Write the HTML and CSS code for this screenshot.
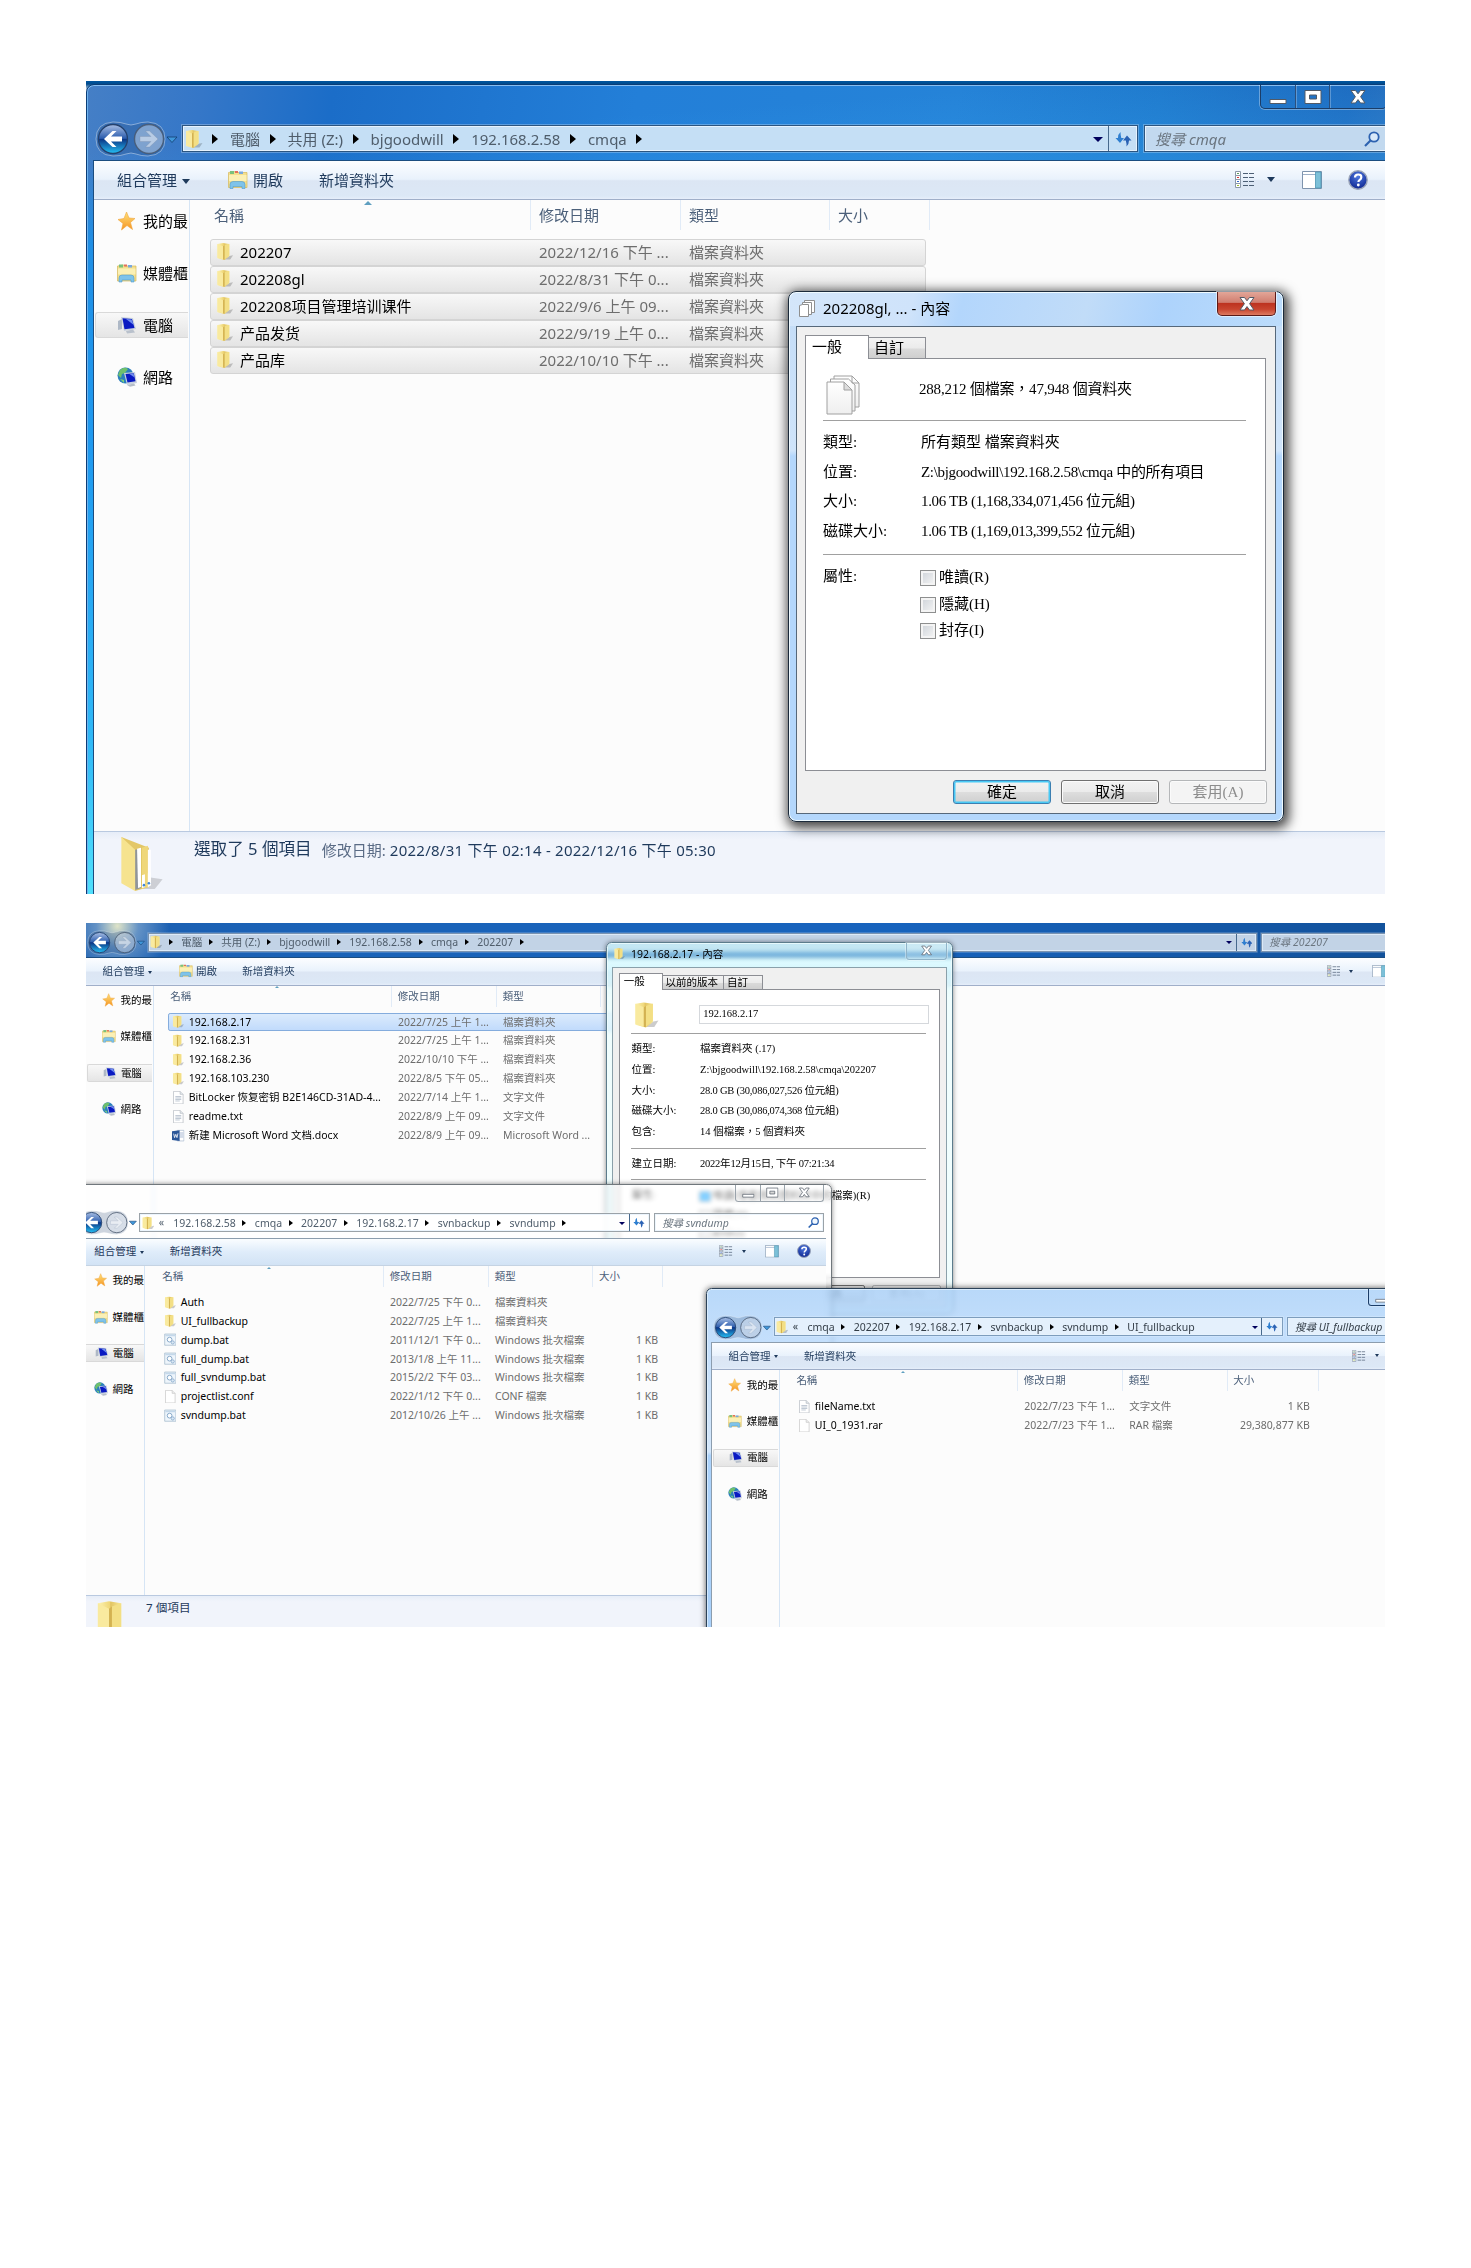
FILE: index.html
```html
<!DOCTYPE html>
<html lang="zh-Hant">
<head>
<meta charset="utf-8">
<title>cmqa</title>
<link rel="stylesheet" href="styles.css">
</head>
<body>
<svg class="defs" width="0" height="0" aria-hidden="true">
  <defs>
    <linearGradient id="gFolder" x1="0" x2="1" y1="0" y2="0"><stop offset="0" stop-color="#fdf3b4"/><stop offset=".5" stop-color="#efd778"/><stop offset=".55" stop-color="#e2c462"/><stop offset="1" stop-color="#f8e896"/></linearGradient>
    <linearGradient id="gBack" x1="0" x2="0" y1="0" y2="1"><stop offset="0" stop-color="#a9bfe4"/><stop offset=".48" stop-color="#2b5cad"/><stop offset=".5" stop-color="#0b3484"/><stop offset="1" stop-color="#25c1f5"/></linearGradient>
    <linearGradient id="gStar" x1="0" x2="0" y1="0" y2="1"><stop offset="0" stop-color="#ffe27a"/><stop offset="1" stop-color="#f59322"/></linearGradient>
    <linearGradient id="gPage" x1="0" x2="0" y1="0" y2="1"><stop offset="0" stop-color="#fff"/><stop offset="1" stop-color="#efefef"/></linearGradient>
    <radialGradient id="gHelp" cx=".5" cy=".3" r=".7"><stop offset="0" stop-color="#4f79e0"/><stop offset="1" stop-color="#0d2590"/></radialGradient>
  </defs>
  <symbol id="i-folder" viewBox="0 0 18 20"><path d="M12 15l5.500-1-3 4.500H8z" fill="#000" opacity=".2"/><path d="M1 2l6-1 6.500 1v13l-5 4-7.500-2z" fill="url(#gFolder)"/><path d="M8.500 3.500L13.500 2v12l-5 4.500z" fill="#f3df85"/><path d="M1 2l6 2.500v14l-6-2z" fill="#f9ea9f"/><path d="M7 4.500l1.500-1v15H7z" fill="#d3b252"/></symbol>
  <symbol id="i-bigfolder" viewBox="0 0 44 58"><path d="M30 42l14 2-8 10H16z" fill="#000" opacity=".15"/><path d="M2 1l28 11v40l-14 4z" fill="#e3c767"/><path d="M16 14l6-1v40l-6 2z" fill="#8f959b"/><path d="M18 13l4-1v40l-3 1z" fill="#fff"/><path d="M23 12l6-2v42l-6 2z" fill="#efd77a"/><path d="M29 14h3v36l-3 2z" fill="#fff"/><path d="M23 40l3-1v13l-3 1zM29 38l3-1v13l-3 2z" fill="#fff"/><circle cx="25" cy="50" r="1.300" fill="#3f86d8"/><circle cx="30" cy="48" r="1.300" fill="#3f86d8"/><path d="M2 1l14 13v42L2 48z" fill="#f6e38f"/></symbol>
  <symbol id="i-star" viewBox="0 0 20 20"><path d="M9.500 1l2.500 6 6 .5-4.500 4 2 7-5.500-4-5.500 4.500L6 12.500 1 8.500l6-1z" fill="url(#gStar)" stroke="#f0a63c" stroke-width=".6"/></symbol>
  <symbol id="i-library" viewBox="0 0 20 19"><path d="M.5 2.500l6-1 2 1h10.500v15H.5z" fill="#f4df8d" stroke="#d6b95b" stroke-width=".7"/><path d="M2 1h4v3H2z" fill="#79c17d"/><path d="M7 1h3v2H7z" fill="#e3705b"/><path d="M11 1.500h4V4h-4z" fill="#79a8df"/><path d="M1 5h17.500v6H1z" fill="#fbf0b5"/><path d="M2 18.500v-4q0-3 3-3h9q3 0 3 3v4h-3v-2H5v2z" fill="#7ec3ea" stroke="#519bcb" stroke-width=".6"/></symbol>
  <symbol id="i-computer" viewBox="0 0 20 18"><path d="M1 5l4-2v10l-4 1z" fill="#aeb8c6"/><path d="M4 1l12 1 3 11-12 2z" fill="#c9d2de"/><path d="M5.500 2.300l9.500.8L17.500 12l-10 1.300z" fill="#0a1ac2"/><path d="M9 3l5.500.4L16.800 9z" fill="#6f8df0"/><path d="M9 15l7-1.500 2 3-8 1z" fill="#b9c1cc"/></symbol>
  <symbol id="i-network" viewBox="0 0 20 20"><circle cx="8.500" cy="8.500" r="8" fill="#2b7fbd"/><path d="M3 3q4-4 8-1l-3 4-3 1-1 4-3-3z" fill="#6fc06c"/><path d="M3 12l4 1v3z" fill="#7fd07b"/><path d="M7 6l11-1 2 11-10 2z" fill="#c9d2de"/><path d="M8.500 7l8.300-.8 1.700 8-8 1.300z" fill="#0a1ac2"/><path d="M12.500 7l4-.6 1 4z" fill="#6f8df0"/><path d="M10 18l7-1.500 1.500 2-5.500 1.300z" fill="#b5bdc8"/></symbol>
  <symbol id="i-views" viewBox="0 0 19 17"><path d="M.5.5h5v4h-5zm0 4h5v4h-5zm0 4h5v4h-5zm0 4h5v4h-5z" fill="#fff" stroke="#8b98a8"/><path d="M2 2.500h2" stroke="#5d9a5d"/><path d="M2 6.500h2" stroke="#d33"/><path d="M2 10.500h2" stroke="#36c"/><path d="M2 14.500h2" stroke="#9b3"/><path d="M8 2.500h5M14 2.500h5M8 6.500h5M14 6.500h5M8 10.500h5M14 10.500h5M8 14.500h5M14 14.500h5" stroke="#4d5f75"/></symbol>
  <symbol id="i-pane" viewBox="0 0 20 18"><path d="M.5.5h19v17H.5z" fill="#fff" stroke="#7d93ad"/><path d="M1 3.500h13" stroke="#9db0c8"/><path d="M13.500 1H19v16h-5.500z" fill="#7cc0d8" stroke="#4d96b4" stroke-width=".8"/></symbol>
  <symbol id="i-help" viewBox="0 0 20 20"><circle cx="10" cy="10" r="9.200" fill="url(#gHelp)" stroke="#9aa4b8" stroke-width="1.400"/><path d="M7 7.500q0-3 3.200-3t3.100 2.700q0 1.500-1.600 2.600-1.300.9-1.300 2.200" fill="none" stroke="#fff" stroke-width="2.200"/><circle cx="10.300" cy="15" r="1.400" fill="#fff"/></symbol>
  <symbol id="i-refresh" viewBox="0 0 17 16"><path d="M5.500 1Q3 3 3 7H.5L5 12l4-5H6.300Q5.500 4 5.500 1z" fill="#2f7fd0"/><path d="M11.500 15.500q2.500-2 2.500-6h2.500L12 4.500 8 9.500h2.800q.9 3 .7 6z" fill="#2a62b4"/></symbol>
  <symbol id="i-search" viewBox="0 0 16 16"><circle cx="10" cy="6" r="4.700" fill="#e8f3ff" fill-opacity=".6" stroke="#2d62b0" stroke-width="1.800"/><path d="M6.500 9.500L1 15" stroke="#2d62b0" stroke-width="2.200"/></symbol>
  <symbol id="i-pages" viewBox="0 0 34 40"><g fill="url(#gPage)" stroke="#a0a0a0" stroke-width="1"><path d="M8 1h18l7 7v24H8z"/><path d="M4.500 4h18l6.500 6v26H4.500z"/><path d="M1 7h17l8 8v24H1z"/><path d="M18 7v8h8z" fill="#ddd"/><path d="M26 1v7h7" fill="none"/></g></symbol>
  <symbol id="i-minipages" viewBox="0 0 16 19"><g fill="#fff" stroke="#8f8f8f"><path d="M5.500 1.500h10v12h-10z"/><path d="M3.500 3.500h9v12h-9z"/><path d="M.5 6.500l3-1h6v12h-9z"/></g></symbol>
  <symbol id="i-txt" viewBox="0 0 16 18"><path d="M1.500.5h9l4 4v13h-13z" fill="#fff" stroke="#b9bec4"/><path d="M10.500.5v4h4" fill="#e4e8ec" stroke="#b9bec4"/><path d="M4 7.500h8M4 9.500h8M4 11.500h8M4 13.500h6" stroke="#a9b6c4"/></symbol>
  <symbol id="i-blank" viewBox="0 0 16 18"><path d="M1.500.5h9l4 4v13h-13z" fill="#fff" stroke="#c9c9c9"/><path d="M10.500.5v4h4" fill="#eee" stroke="#c9c9c9"/></symbol>
  <symbol id="i-bat" viewBox="0 0 18 18"><path d="M1 1h16v16H1z" fill="#eef5fb" stroke="#9db4c9"/><path d="M2 2h14v2H2z" fill="#c4d8ea"/><circle cx="8" cy="9" r="3.400" fill="#fff" stroke="#7ea2c6" stroke-width="1.300"/><circle cx="12.500" cy="13" r="2.300" fill="#dbe8f4" stroke="#7ea2c6"/></symbol>
  <symbol id="i-docx" viewBox="0 0 19 18"><path d="M8 1h10v16H8z" fill="#fff" stroke="#a3b4cc"/><path d="M12 5h5M12 8h5M12 11h5" stroke="#7f98c0"/><path d="M0 2.500L11.500 1v16L0 15.500z" fill="#2a5699"/><path d="M2.500 6l1.400 6 1.800-5 1.800 5 1.500-6.500" fill="none" stroke="#fff" stroke-width="1.200"/></symbol>
  <symbol id="i-nav" viewBox="0 0 86 36"><path d="M18 1q8 0 13 2t10 0 12-2q17 1 17 17T53 35q-7 0-12-2t-10 0-13 2Q1 34 1 18T18 1z" fill="#20406c" fill-opacity=".22" stroke="#fff" stroke-opacity=".4"/><circle cx="18" cy="18" r="14.500" fill="url(#gBack)" stroke="#24426e" stroke-width="1.300"/><path d="M9 18l8.500-8h4L16 15.500h11v5H16l5.500 5.500h-4z" fill="#fff"/><circle cx="54" cy="18" r="14.500" fill="#e4ecf5" fill-opacity=".42" stroke="#47566c" stroke-opacity=".8" stroke-width="1.400"/><path d="M63 18l-8.500-8h-4l5.500 5.500H45v5h11L50.500 26h4z" fill="#fff" fill-opacity=".45" stroke="#7b8ea8" stroke-opacity=".5" stroke-width=".6"/><path d="M72 16h10l-5 5.500z" fill="#3f97da" stroke="#123d70" stroke-width=".8"/></symbol>
  <symbol id="i-min" viewBox="0 0 18 16"><path d="M1 10.500h16v4H1z" fill="#fff" stroke="#525a66"/></symbol>
  <symbol id="i-max" viewBox="0 0 18 16"><path d="M1 1.500h16v13H1z M5.500 6h7v4h-7z" fill="#fff" fill-rule="evenodd" stroke="#525a66"/></symbol>
  <symbol id="i-close" viewBox="0 0 16 16"><path d="M1 1.500h4.500L8 4.800l2.500-3.300H15L10.600 7.700l4.400 6.300h-4.500L8 10.600 5.500 14H1l4.400-6.300z" fill="#fff" stroke="#525a66"/></symbol>
</svg>

<main class="page">
<section class="shot shot-large">
  <div class="explorer" id="w1">
    <div class="winbtns"><span><svg><use href="#i-min"/></svg></span><span><svg><use href="#i-max"/></svg></span><span><svg><use href="#i-close"/></svg></span></div>
    <div class="nav">
      <svg class="navicon"><use href="#i-nav"/></svg>
      <div class="address"><svg class="fi"><use href="#i-folder"/></svg><i></i><b>電腦</b><i></i><b>共用 (Z:)</b><i></i><b>bjgoodwill</b><i></i><b>192.168.2.58</b><i></i><b>cmqa</b><i></i><span class="caret"></span><span class="refresh"><svg><use href="#i-refresh"/></svg></span></div>
      <div class="search"><em>搜尋 cmqa</em><svg><use href="#i-search"/></svg></div>
    </div>
    <div class="client">
      <div class="toolbar"><span class="org">組合管理</span><svg class="lib"><use href="#i-library"/></svg><span class="open">開啟</span><span>新增資料夾</span><div class="tools"><svg class="views"><use href="#i-views"/></svg><u></u><svg class="pane"><use href="#i-pane"/></svg><svg class="help"><use href="#i-help"/></svg></div></div>
      <div class="body">
        <ul class="side"><li><svg><use href="#i-star"/></svg>我的最</li><li><svg><use href="#i-library"/></svg>媒體櫃</li><li class="on"><svg><use href="#i-computer"/></svg>電腦</li><li><svg><use href="#i-network"/></svg>網路</li></ul>
        <div class="list">
          <div class="head"><span>名稱</span><span>修改日期</span><span>類型</span><span>大小</span></div>
          <div class="row picked"><span><svg><use href="#i-folder"/></svg>202207</span><span>2022/12/16 下午 ...</span><span>檔案資料夾</span><span></span></div>
          <div class="row picked"><span><svg><use href="#i-folder"/></svg>202208gl</span><span>2022/8/31 下午 0...</span><span>檔案資料夾</span><span></span></div>
          <div class="row picked"><span lang="zh-Hans"><svg><use href="#i-folder"/></svg>202208项目管理培训课件</span><span>2022/9/6 上午 09...</span><span>檔案資料夾</span><span></span></div>
          <div class="row picked"><span lang="zh-Hans"><svg><use href="#i-folder"/></svg>产品发货</span><span>2022/9/19 上午 0...</span><span>檔案資料夾</span><span></span></div>
          <div class="row picked"><span lang="zh-Hans"><svg><use href="#i-folder"/></svg>产品库</span><span>2022/10/10 下午 ...</span><span>檔案資料夾</span><span></span></div>
        </div>
      </div>
      <div class="status"><svg><use href="#i-bigfolder"/></svg><strong>選取了 5 個項目</strong><p><span>修改日期:</span> 2022/8/31 下午 02:14 - 2022/12/16 下午 05:30</p></div>
    </div>
  </div>

  <div class="dialog" id="d1">
    <div class="dtitle"><svg><use href="#i-minipages"/></svg><span>202208gl, ... - 內容</span></div>
    <div class="dclose"><svg><use href="#i-close"/></svg></div>
    <div class="dframe">
      <div class="tabs"><span class="cur">一般</span><span>自訂</span></div>
      <div class="panel">
        <div class="lead"><svg><use href="#i-pages"/></svg><span class="count">288,212 個檔案，47,948 個資料夾</span></div>
        <dl><dt>類型:</dt><dd>所有類型 檔案資料夾</dd><dt>位置:</dt><dd class="tight">Z:\bjgoodwill\192.168.2.58\cmqa 中的所有項目</dd><dt>大小:</dt><dd class="tight">1.06 TB (1,168,334,071,456 位元組)</dd><dt>磁碟大小:</dt><dd class="tight">1.06 TB (1,169,013,399,552 位元組)</dd></dl>
        <dl><dt>屬性:</dt><dd class="checks"><label><i></i>唯讀(R)</label><label><i></i>隱藏(H)</label><label><i></i>封存(I)</label></dd></dl>
      </div>
      <div class="buttons"><span class="ok">確定</span><span>取消</span><span class="off">套用(A)</span></div>
    </div>
  </div>
</section>

<section class="shot shot-small">
 <div class="desk">
  <div class="explorer" id="w2">
    <div class="winbtns"><span><svg><use href="#i-min"/></svg></span><span><svg><use href="#i-max"/></svg></span><span><svg><use href="#i-close"/></svg></span></div>
    <div class="nav">
      <svg class="navicon"><use href="#i-nav"/></svg>
      <div class="address"><svg class="fi"><use href="#i-folder"/></svg><i></i><b>電腦</b><i></i><b>共用 (Z:)</b><i></i><b>bjgoodwill</b><i></i><b>192.168.2.58</b><i></i><b>cmqa</b><i></i><b>202207</b><i></i><span class="caret"></span><span class="refresh"><svg><use href="#i-refresh"/></svg></span></div>
      <div class="search"><em>搜尋 202207</em></div>
    </div>
    <div class="client">
      <div class="toolbar"><span class="org">組合管理</span><svg class="lib"><use href="#i-library"/></svg><span class="open">開啟</span><span>新增資料夾</span><div class="tools"><svg class="views"><use href="#i-views"/></svg><u></u><svg class="pane"><use href="#i-pane"/></svg><svg class="help"><use href="#i-help"/></svg></div></div>
      <div class="body">
        <ul class="side"><li><svg><use href="#i-star"/></svg>我的最</li><li><svg><use href="#i-library"/></svg>媒體櫃</li><li class="on"><svg><use href="#i-computer"/></svg>電腦</li><li><svg><use href="#i-network"/></svg>網路</li></ul>
        <div class="list">
          <div class="head"><span>名稱</span><span>修改日期</span><span>類型</span></div>
          <div class="row active"><span><svg><use href="#i-folder"/></svg>192.168.2.17</span><span>2022/7/25 上午 1...</span><span>檔案資料夾</span><span></span></div>
          <div class="row"><span><svg><use href="#i-folder"/></svg>192.168.2.31</span><span>2022/7/25 上午 1...</span><span>檔案資料夾</span><span></span></div>
          <div class="row"><span><svg><use href="#i-folder"/></svg>192.168.2.36</span><span>2022/10/10 下午 ...</span><span>檔案資料夾</span><span></span></div>
          <div class="row"><span><svg><use href="#i-folder"/></svg>192.168.103.230</span><span>2022/8/5 下午 05...</span><span>檔案資料夾</span><span></span></div>
          <div class="row"><span lang="zh-Hans"><svg><use href="#i-txt"/></svg>BitLocker 恢复密钥 B2E146CD-31AD-4...</span><span>2022/7/14 上午 1...</span><span>文字文件</span><span></span></div>
          <div class="row"><span><svg><use href="#i-txt"/></svg>readme.txt</span><span>2022/8/9 上午 09...</span><span>文字文件</span><span></span></div>
          <div class="row"><span lang="zh-Hans"><svg><use href="#i-docx"/></svg>新建 Microsoft Word 文档.docx</span><span>2022/8/9 上午 09...</span><span>Microsoft Word ...</span><span></span></div>
        </div>
      </div>
    </div>
  </div>

  <div class="dialog" id="d2">
    <div class="dtitle"><svg><use href="#i-folder"/></svg><span>192.168.2.17 - 內容</span></div>
    <div class="dclose"><svg><use href="#i-close"/></svg></div>
    <div class="dframe">
      <div class="tabs"><span class="cur">一般</span><span class="prev">以前的版本</span><span>自訂</span></div>
      <div class="panel">
        <div class="lead"><svg><use href="#i-folder"/></svg><span class="field">192.168.2.17</span></div>
        <dl><dt>類型:</dt><dd>檔案資料夾 (.17)</dd><dt>位置:</dt><dd>Z:\bjgoodwill\192.168.2.58\cmqa\202207</dd><dt>大小:</dt><dd class="tight">28.0 GB (30,086,027,526 位元組)</dd><dt>磁碟大小:</dt><dd class="tight">28.0 GB (30,086,074,368 位元組)</dd><dt>包含:</dt><dd>14 個檔案，5 個資料夾</dd></dl>
        <dl><dt>建立日期:</dt><dd class="tight">2022年12月15日, 下午 07:21:34</dd></dl>
        <dl><dt>屬性:</dt><dd class="checks"><label><i class="full"></i>唯讀(僅套用到資料夾中的檔案)(R)</label><label><i></i>隱藏(H)</label><label><i></i>封存(I)</label></dd></dl>
      </div>
      <div class="buttons"><span class="ok">確定</span><span>取消</span><span class="off">套用(A)</span></div>
    </div>
  </div>

  <div class="explorer" id="w3">
    <div class="winbtns"><span><svg><use href="#i-min"/></svg></span><span><svg><use href="#i-max"/></svg></span><span><svg><use href="#i-close"/></svg></span></div>
    <div class="nav">
      <svg class="navicon"><use href="#i-nav"/></svg>
      <div class="address"><svg class="fi"><use href="#i-folder"/></svg><s>«</s><b>192.168.2.58</b><i></i><b>cmqa</b><i></i><b>202207</b><i></i><b>192.168.2.17</b><i></i><b>svnbackup</b><i></i><b>svndump</b><i></i><span class="caret"></span><span class="refresh"><svg><use href="#i-refresh"/></svg></span></div>
      <div class="search"><em>搜尋 svndump</em><svg><use href="#i-search"/></svg></div>
    </div>
    <div class="client">
      <div class="toolbar"><span class="org">組合管理</span><span>新增資料夾</span><div class="tools"><svg class="views"><use href="#i-views"/></svg><u></u><svg class="pane"><use href="#i-pane"/></svg><svg class="help"><use href="#i-help"/></svg></div></div>
      <div class="body">
        <ul class="side"><li><svg><use href="#i-star"/></svg>我的最</li><li><svg><use href="#i-library"/></svg>媒體櫃</li><li class="on"><svg><use href="#i-computer"/></svg>電腦</li><li><svg><use href="#i-network"/></svg>網路</li></ul>
        <div class="list">
          <div class="head"><span>名稱</span><span>修改日期</span><span>類型</span><span>大小</span></div>
          <div class="row"><span><svg><use href="#i-folder"/></svg>Auth</span><span>2022/7/25 下午 0...</span><span>檔案資料夾</span><span></span></div>
          <div class="row"><span><svg><use href="#i-folder"/></svg>UI_fullbackup</span><span>2022/7/25 上午 1...</span><span>檔案資料夾</span><span></span></div>
          <div class="row"><span><svg><use href="#i-bat"/></svg>dump.bat</span><span>2011/12/1 下午 0...</span><span>Windows 批次檔案</span><span>1 KB</span></div>
          <div class="row"><span><svg><use href="#i-bat"/></svg>full_dump.bat</span><span>2013/1/8 上午 11...</span><span>Windows 批次檔案</span><span>1 KB</span></div>
          <div class="row"><span><svg><use href="#i-bat"/></svg>full_svndump.bat</span><span>2015/2/2 下午 03...</span><span>Windows 批次檔案</span><span>1 KB</span></div>
          <div class="row"><span><svg><use href="#i-blank"/></svg>projectlist.conf</span><span>2022/1/12 下午 0...</span><span>CONF 檔案</span><span>1 KB</span></div>
          <div class="row"><span><svg><use href="#i-bat"/></svg>svndump.bat</span><span>2012/10/26 上午 ...</span><span>Windows 批次檔案</span><span>1 KB</span></div>
        </div>
      </div>
      <div class="status"><svg class="plain" viewBox="0 0 18 20" preserveAspectRatio="none"><use href="#i-folder"/></svg><strong>7 個項目</strong></div>
    </div>
  </div>

  <div class="explorer" id="w4">
    <div class="winbtns"><span><svg><use href="#i-min"/></svg></span><span><svg><use href="#i-max"/></svg></span><span><svg><use href="#i-close"/></svg></span></div>
    <div class="nav">
      <svg class="navicon"><use href="#i-nav"/></svg>
      <div class="address"><svg class="fi"><use href="#i-folder"/></svg><s>«</s><b>cmqa</b><i></i><b>202207</b><i></i><b>192.168.2.17</b><i></i><b>svnbackup</b><i></i><b>svndump</b><i></i><b>UI_fullbackup</b><span class="caret"></span><span class="refresh"><svg><use href="#i-refresh"/></svg></span></div>
      <div class="search"><em>搜尋 UI_fullbackup</em></div>
    </div>
    <div class="client">
      <div class="toolbar"><span class="org">組合管理</span><span>新增資料夾</span><div class="tools"><svg class="views"><use href="#i-views"/></svg><u></u><svg class="pane"><use href="#i-pane"/></svg><svg class="help"><use href="#i-help"/></svg></div></div>
      <div class="body">
        <ul class="side"><li><svg><use href="#i-star"/></svg>我的最</li><li><svg><use href="#i-library"/></svg>媒體櫃</li><li class="on"><svg><use href="#i-computer"/></svg>電腦</li><li><svg><use href="#i-network"/></svg>網路</li></ul>
        <div class="list">
          <div class="head"><span>名稱</span><span>修改日期</span><span>類型</span><span>大小</span></div>
          <div class="row"><span><svg><use href="#i-txt"/></svg>fileName.txt</span><span>2022/7/23 下午 1...</span><span>文字文件</span><span>1 KB</span></div>
          <div class="row"><span><svg><use href="#i-blank"/></svg>UI_0_1931.rar</span><span>2022/7/23 下午 1...</span><span>RAR 檔案</span><span>29,380,877 KB</span></div>
        </div>
      </div>
    </div>
  </div>
 </div>
</section>
</main>
</body>
</html>
```
FILE: styles.css
```css
* { box-sizing: border-box; }
body { margin: 0; background: #fff; font: 15px/20px "Noto Sans", "Noto Sans CJK TC", sans-serif; color: #000; }
[lang="zh-Hans"] { font-family: "Noto Sans", "Noto Sans CJK SC", sans-serif; }
svg { display: block; flex: none; }
.defs { position: absolute; }
.page { height: 2268px; padding: 81px 86px 0; overflow: hidden; }
.shot { position: relative; width: 1299px; overflow: hidden; }
.shot-large { height: 813px; background: linear-gradient(#0056a0 0, #004a8c 3px, #fff 10px); }
.shot-small { height: 704px; margin-top: 29px; }
.desk { position: relative; zoom: .7; width: 1856px; height: 1006px; }

/* Explorer window */
.explorer { position: absolute; display: flex; flex-direction: column; padding: 0 7px 7px; border-radius: 8px; overflow: hidden; white-space: nowrap; }
#w1 { left: 0; top: 3px; width: 1311px; height: 824px; border: 1px solid #0b3d77; box-shadow: inset 0 1px #86bdf0, inset 1px 0 #6fb3ee;
  background: linear-gradient(#2a8be200 0, #1f8fe5 10%, #1f9af0 35%, #2fb8f7 70%, #63f6ff 100%) left 0 top 77px / 8px 100% no-repeat, linear-gradient(176deg, transparent 40%, #36a5f066 100%) 0 0 / 100% 77px no-repeat, linear-gradient(100deg, #457fc6 0, #3577c8 8%, #1b6dc8 17%, #237fd8 38%, #2583d8 60%, #1f7acd 74%, #1c68bd 87%, #3d73b4 97%); }
#w2 { left: -7px; top: -26px; width: 1938px; height: 1000px; background: radial-gradient(circle at 52px 30px, #dfe4c8 0, #88acd0aa 30px, transparent 75px), linear-gradient(90deg, #1c5fb0 0, #1a63b8 20%, #1763bd 60%, #12529c 95%); }
#w3 { left: -20px; top: 373px; width: 1085px; height: 690px; border: 1px solid #70777c; background: #ffffff88; backdrop-filter: blur(3px) saturate(1.4); box-shadow: 0 0 8px #0007; }
#w4 { left: 886px; top: 522px; width: 1083px; height: 520px; border: 1px solid #2c4258; background: linear-gradient(#a9d0f8d0, #b7d8fbd0 76px, #cde3fadd 45%, #9ecbfadd 46%); backdrop-filter: blur(3px); box-shadow: inset 1px 1px #e6f4ff, 0 0 9px #000a; }

.winbtns { position: absolute; top: 0; right: 9px; width: 127px; height: 24px; display: grid; grid-template-columns: 34px 34px 1fr; border: 1px solid #1b3d68; border-top: 0; border-radius: 0 0 5px 5px; box-shadow: 0 0 0 1px #ffffff55; }
.winbtns span { display: grid; place-items: center; }
.winbtns span + span { border-left: 1px solid #2b4f7c; box-shadow: inset 1px 0 #ffffff44; }
.winbtns svg { width: 18px; height: 16px; }
#w3 .winbtns { border-color: #9aa3ab; }
#w3 .winbtns span + span { border-color: #9aa3ab; }

.nav { flex: none; display: flex; height: 75px; padding: 40px 2px 0 0; }
.navicon { width: 86px; height: 36px; margin: -4px 1px 0 1px; }
.address, .search { height: 27px; border: 1px solid #2c5580; box-shadow: inset 0 0 0 1px #e6f2fd, 0 0 0 1px #ffffff44; background: #d9e9f8dd; display: flex; align-items: center; color: #4f5d6b; }
#w1 .address { background: #c5dff5; }
#w1 .search { background: #c2d9ef; }
#w2 .address, #w2 .search { background: #c2d3e6; border-color: #7a93b0; }
#w3 .address, #w3 .search { background: #ffffffdd; border-color: #9aa2a8; }
#w4 .address, #w4 .search { background: #e4f0fc; border-color: #7d9dbd; color: #333d47; }
.address { flex: 1; margin-right: 6px; }
.address b { font-weight: 400; }
.address i { width: 0; border: 5px solid transparent; border-left: 6px solid #000; border-right: 0; margin: 0 12px 0 10px; }
.address b + i { margin-left: 9.500px; }
.address s { text-decoration: none; width: 27px; padding-left: 6px; line-height: 16px; }
.fi { width: 18px; height: 20px; margin: 0 0 0 2px; }
.address .fi + i { margin-left: 9px; }
.caret { margin: 2px 5px 0 auto; border: 5px solid transparent; border-top-color: #00005c; border-bottom: 0; }
.address .refresh { align-self: stretch; width: 29px; border-left: 1px solid #47698d; display: grid; place-items: center; }
.refresh svg { width: 17px; height: 16px; }
.search { width: 243px; padding: 0 22px 0 10px; justify-content: space-between; color: #6b7680; }
.search svg { width: 16px; height: 16px; margin-right: -16px; }

.client { flex: 1; min-height: 0; display: flex; flex-direction: column; background: #fcfcfc; border: 1px solid #1b4d80; border-width: 1px 0 0 1px; margin-left: -1px; }
#w3 .client, #w4 .client { border-color: #8c9dae; }
.toolbar { flex: none; display: flex; align-items: center; height: 39px; padding: 0 21px 1px 23px; color: #1e395b; border-bottom: 1px solid #a0afc9; background: linear-gradient(#fcfdff 0, #e9f2fc 48%, #dce6f4 52%, #dce8f6 92%, #e6eefa); }
#w3 .toolbar { background: linear-gradient(#fafdff 0, #dfecfa 50%, #d2e3f5 100%); border-color: #c5d3e3; }
.org { margin-right: 38px; }
.org::after, .tools u { content: ""; display: inline-block; border: 4px solid transparent; border-top: 5px solid #1e395b; border-bottom: 0; margin: 0 0 2px 5px; }
.lib { width: 20px; height: 19px; margin-right: 5px; }
.open { margin-right: 36px; }
#w3 .org, #w4 .org { margin-right: 37px; }
.tools { display: flex; align-items: center; margin-left: auto; }
.views { width: 19px; height: 17px; }
.tools u { margin: 0 27px 0 13px; }
.pane { width: 20px; height: 18px; margin-right: 26px; }
.help { width: 20px; height: 20px; }

.body { flex: 1; min-height: 0; display: flex; }
.side { list-style: none; margin: 0; padding: 8px 0 0; width: 96px; border-right: 1px solid #d6e5f5; overflow: hidden; }
.side li { display: flex; align-items: center; gap: 6px; height: 26px; margin: 0 1px 26px 1px; padding: 0 0 1px 22px; }
.side svg { width: 20px; height: 20px; }
.side .on { border: 1px solid #d9d9d9; border-right: 0; border-radius: 3px 0 0 3px; padding-left: 21px; background: linear-gradient(#f8f8f8, #e5e5e5); }
.list { flex: 1; padding-left: 20px; }
.head, .row { display: grid; grid-template-columns: 321px 150px 149px 100px; width: 720px; }
.head { height: 25px; margin-bottom: 13.500px; color: #4c607a; position: relative; line-height: 30px; }
.head span { border-right: 1px solid #e1ebf7; padding-left: 8px; }
.head span:first-child { padding-left: 4px; }
.head::before { content: ""; position: absolute; left: 154px; top: 1px; border: 4px solid transparent; border-bottom-color: #5f9fc0; border-top: 0; }
.row { height: 27px; width: 716px; grid-template-columns: 321px 150px 149px 96px; line-height: 24px; border: 1px solid transparent; border-radius: 3px; color: #6d6d6d; }
#w4 .head { grid-template-columns: 321px 150px 149px 130px; width: 750px; }
#w4 .row { grid-template-columns: 321px 150px 149px 121px; width: 743px; }
.row span { padding-left: 7px; overflow: hidden; }
.row span:first-child { display: flex; align-items: center; gap: 6px; padding: 0 0 1px 5px; color: #000; overflow: visible; }
.row span:last-child { text-align: right; padding: 0 5px 0 0; }
.row svg { width: 18px; height: 19px; }
.picked { border-color: #d4d4d4; background: linear-gradient(#f8f8f8, #e4e4e4); }
.active { border-color: #84acdd; background: linear-gradient(#dcebfc, #c1dbfc); }

.status { flex: none; display: flex; height: 69px; padding: 4px 0 0 25px; border-top: 1px solid #b9c9e0; background: linear-gradient(#e6edf8, #f1f4fb 8px); color: #1e395b; }
.status svg { width: 44px; height: 57px; margin-right: 31px; }
.status .plain { width: 48px; height: 62px; margin: 0 24px 0 0; }
.status strong { font-weight: 400; font-size: 16.600px; line-height: 25px; }
.status p { margin: 0 0 0 10px; line-height: 29px; letter-spacing: .25px; }
.status p span { color: #5a6b85; letter-spacing: 0; }
#w3 .status { height: 94px; }

/* Properties dialog */
.dialog { position: absolute; width: 495px; height: 531px; padding: 34px 7px 7px; border: 1px solid #1b2a3a; border-radius: 8px; white-space: nowrap; }
#d1 { left: 702px; top: 210px; background: linear-gradient(105deg, #d4e6fa 0, #cfe3fa 25%, #b3d6fc 35%, #c1dcf8 60%, #add3fc 75%, #bcdcfb 100%) 0 0 / 100% 34px no-repeat, linear-gradient(#c3dcf7 0, #cfe4fa 30%, #b4d7fc 31%); box-shadow: inset 0 0 0 1px #effaff, 2px 3px 12px 3px #000b; width: 496px; }
#d2 { left: 743px; top: 27px; width: 496px; border-color: #5c7c8c; background: linear-gradient(#c4faff80, #c4faff80 40px, #eaffffb0 80px); backdrop-filter: blur(3px); box-shadow: inset 0 0 0 1px #f2ffff, 0 0 8px #0007; }
.dtitle { position: absolute; left: 10px; top: 6px; display: flex; gap: 8px; align-items: center; }
.dtitle svg { width: 16px; height: 19px; }
.dclose { position: absolute; right: 7px; top: 0; width: 59px; height: 24px; display: grid; place-items: center; border: 1px solid #5a1a18; border-top: 0; border-radius: 0 0 5px 5px; background: linear-gradient(#e3a698 0, #d07e70 45%, #bd3320 50%, #c8452f 75%, #dd7a60); box-shadow: 0 0 0 1px #ffffff88; }
.dclose svg { width: 16px; height: 16px; }
#d2 .dclose { border-color: #8fb3c8; background: #ffffff22; }
.dframe { height: 100%; border: 1px solid #56687a; background: #f0f0f0; padding: 8px 9px 0 8px; font-family: "Liberation Serif", "Noto Sans CJK TC", serif; font-size: 15px; }
#d2 .dframe { border-color: #8aa0aa; }
.tabs { display: flex; align-items: flex-end; height: 23px; position: relative; }
.tabs span { width: 57px; height: 21px; line-height: 20px; padding-left: 5px; border: 1px solid #8c8e94; border-width: 1px 1px 0 0; background: linear-gradient(#f3f3f3 0, #ebebeb 50%, #dadada 55%, #cfcfcf); }
.tabs .cur { width: 64px; height: 24px; margin-bottom: -1px; padding-left: 6px; line-height: 22px; border-width: 1px; border-bottom: 0; background: #fff; }
.tabs .prev { width: 86px; padding-left: 3px; }
.panel { height: 413px; border: 1px solid #8c8e94; background: #fff; padding: 0 18px 0 16px; }
.lead { display: flex; align-items: center; height: 61px; padding-left: 4px; }
.lead svg { width: 34px; height: 40px; margin: 10px 59px 0 0; }
.count { margin-top: -2px; letter-spacing: -.2px; }
#d2 .lead svg { width: 36px; }
.field { flex: 1; height: 27px; border: 1px solid #d5d8dc; padding-left: 4px; line-height: 23px; margin: 8px -4px 0 -1px; }
.panel dl { display: grid; grid-template-columns: 98px 1fr; margin: 0 1px; padding: 7px 0; border-top: 1px solid #a0a0a0; line-height: 29.700px; }
.panel dt, .panel dd { margin: 0; }
.tight { letter-spacing: -.33px; }
.checks label { display: flex; align-items: center; height: 26.500px; gap: 3px; margin-left: -1px; }
.panel .checks { padding-top: 3px; }
.checks i { width: 16px; height: 16px; border: 1px solid #8e8f8f; background: linear-gradient(135deg, #cdd2d8, #f6f6f6); box-shadow: inset 0 0 0 2px #f4f4f4; }
.checks .full { background: #1a93e0; box-shadow: none; }
.buttons { display: flex; justify-content: flex-end; gap: 10px; margin: 9px -1px 0 0; }
.buttons span { width: 98px; height: 24px; line-height: 22px; text-align: center; border: 1px solid #707070; border-radius: 3px; background: linear-gradient(#f2f2f2 0, #ebebeb 50%, #dddddd 52%, #cfcfcf); box-shadow: inset 0 0 0 1px #fbfbfb; }
.buttons .ok { border-color: #3c7fb1; box-shadow: inset 0 0 0 1.500px #48c9f5; }
.buttons .off { border-color: #b5b7b9; background: #f4f4f4; color: #8d8d8d; }
```
